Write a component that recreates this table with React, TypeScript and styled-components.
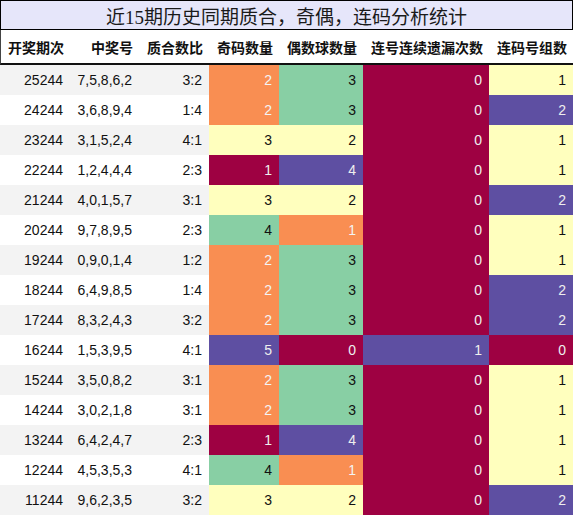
import React from 'react';
import styled, {createGlobalStyle} from 'styled-components';

const GlobalStyle = createGlobalStyle`
    html, body {
        margin: 0;
        padding: 0;
        background: #ffffff;
    }
`;

type Tone = 'O' | 'G' | 'R' | 'Y' | 'P';

const TONES: Record<Tone, {bg: string; fg: string}> = {
    O: {bg: '#f98e52', fg: '#f4f4f4'},
    G: {bg: '#88cfa4', fg: '#111111'},
    R: {bg: '#9e0142', fg: '#eeeeee'},
    Y: {bg: '#ffffbe', fg: '#111111'},
    P: {bg: '#5e4fa2', fg: '#eeeeee'},
};

const COLUMNS = '70px 69px 70px 70px 84px 126px 84px';

const Page = styled.div`
    width: 573px;
    font-family: "Liberation Sans", "Noto Sans CJK SC", sans-serif;
`;

const Title = styled.div`
    height: 28px;
    border: 1px solid #000;
    background: #e6e6fa;
    display: flex;
    align-items: center;
    justify-content: center;
    font-family: "Liberation Serif", "Noto Sans CJK SC", serif;
    font-size: 19px;
    color: #1a1a1a;
`;

const HeaderRow = styled.div`
    display: grid;
    grid-template-columns: ${COLUMNS};
    height: 33px;
    border-bottom: 2px solid #111;
    border-left: 1px solid #444;
    align-items: center;
`;

const HeaderCell = styled.div<{$shift?: number}>`
    text-align: center;
    font-family: "Noto Sans CJK SC", sans-serif;
    font-weight: 700;
    font-size: 14px;
    color: #111;
    padding-left: ${(p) => p.$shift || 0}px;
`;

const Row = styled.div`
    display: grid;
    grid-template-columns: ${COLUMNS};
    height: 30px;
`;

const Cell = styled.div<{$bg: string; $fg: string}>`
    display: flex;
    align-items: center;
    justify-content: flex-end;
    padding-right: 7px;
    font-size: 14px;
    background: ${(p) => p.$bg};
    color: ${(p) => p.$fg};
`;

const headers = ['开奖期次', '中奖号', '质合数比', '奇码数量', '偶数球数量', '连号连续遗漏次数', '连码号组数'];

const rows: [string, string, string, string, string, string, string][] = [
    ['25244', '7,5,8,6,2', '3:2', '2O', '3G', '0R', '1Y'],
    ['24244', '3,6,8,9,4', '1:4', '2O', '3G', '0R', '2P'],
    ['23244', '3,1,5,2,4', '4:1', '3Y', '2Y', '0R', '1Y'],
    ['22244', '1,2,4,4,4', '2:3', '1R', '4P', '0R', '1Y'],
    ['21244', '4,0,1,5,7', '3:1', '3Y', '2Y', '0R', '2P'],
    ['20244', '9,7,8,9,5', '2:3', '4G', '1O', '0R', '1Y'],
    ['19244', '0,9,0,1,4', '1:2', '2O', '3G', '0R', '1Y'],
    ['18244', '6,4,9,8,5', '1:4', '2O', '3G', '0R', '2P'],
    ['17244', '8,3,2,4,3', '3:2', '2O', '3G', '0R', '2P'],
    ['16244', '1,5,3,9,5', '4:1', '5P', '0R', '1P', '0R'],
    ['15244', '3,5,0,8,2', '3:1', '2O', '3G', '0R', '1Y'],
    ['14244', '3,0,2,1,8', '3:1', '2O', '3G', '0R', '1Y'],
    ['13244', '6,4,2,4,7', '2:3', '1R', '4P', '0R', '1Y'],
    ['12244', '4,5,3,5,3', '4:1', '4G', '1O', '0R', '1Y'],
    ['11244', '9,6,2,3,5', '3:2', '3Y', '2Y', '0R', '2P'],
];

export default function App() {
    return (
        <Page>
            <GlobalStyle />
            <Title>近15期历史同期质合，奇偶，连码分析统计</Title>
            <HeaderRow>
                {headers.map((h, i) => (
                    <HeaderCell key={h} $shift={i === 1 ? 13 : 0}>{h}</HeaderCell>
                ))}
            </HeaderRow>
            {rows.map((r, i) => {
                const plain = i % 2 === 0 ? '#f3f3f3' : '#ffffff';
                return (
                    <Row key={r[0]}>
                        {r.slice(0, 3).map((v, j) => (
                            <Cell key={j} $bg={plain} $fg='#111'>{v}</Cell>
                        ))}
                        {r.slice(3).map((v, j) => {
                            const tone = TONES[v[1] as Tone];
                            return (
                                <Cell key={j + 3} $bg={tone.bg} $fg={tone.fg}>{v[0]}</Cell>
                            );
                        })}
                    </Row>
                );
            })}
        </Page>
    );
}
